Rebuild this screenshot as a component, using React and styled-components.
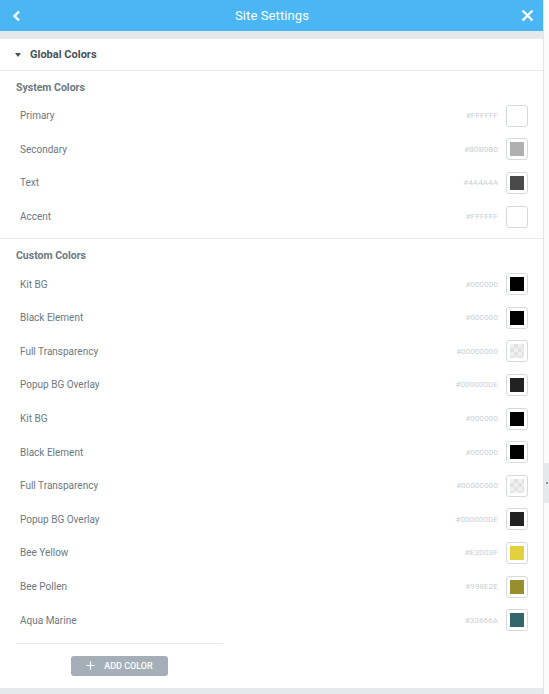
import React from "react";
import styled, { createGlobalStyle } from "styled-components";

const GlobalStyle = createGlobalStyle`
  html, body {
    margin: 0;
    padding: 0;
    background: #f7f8f9;
  }
  body {
    font-family: Roboto, "Liberation Sans", Arial, sans-serif;
  }
`;

const Page = styled.div`
  display: flex;
  height: 694px;
  overflow: hidden;
`;

const Panel = styled.div`
  width: 543px;
  display: flex;
  flex-direction: column;
  background: #e6e9ec;
  border-right: 1px solid #e2e5e8;
`;

const Side = styled.div`
  flex: 1;
  position: relative;
  background: #fbfbfc;
`;

const Handle = styled.div`
  position: absolute;
  left: 0;
  top: 463px;
  width: 5px;
  height: 40px;
  background: #e6e9ec;
  &::after {
    content: "";
    position: absolute;
    left: 2px;
    top: 19px;
    width: 2px;
    height: 2px;
    background: #8b959d;
  }
`;

const Header = styled.header`
  height: 31px;
  background: #4ab7f4;
  color: #fff;
  display: flex;
  align-items: center;
  justify-content: space-between;
  padding: 0 9px 0 10px;
`;

const Title = styled.h1`
  margin: 0;
  font-size: 13px;
  font-weight: 400;
  letter-spacing: 0.1px;
`;

const IconBtn = styled.span`
  width: 14px;
  height: 14px;
  display: flex;
  align-items: center;
  justify-content: center;
`;

const Body = styled.div`
  margin-top: 8px;
  background: #fff;
  display: flex;
  flex-direction: column;
  height: 649px;
`;

const SectionHead = styled.div`
  height: 31px;
  display: flex;
  align-items: center;
  gap: 9px;
  padding-left: 15px;
  border-bottom: 1px solid #e6e9ec;
  font-size: 11px;
  font-weight: 700;
  color: #495157;
`;

const Caret = styled.span`
  width: 0;
  height: 0;
  border-left: 3.5px solid transparent;
  border-right: 3.5px solid transparent;
  border-top: 4px solid #495157;
`;

const Group = styled.div`
  padding: ${(p) => p.$top}px 15px ${(p) => p.$bottom}px 16px;
  border-bottom: ${(p) => (p.$line ? "1px solid #e6e9ec" : "none")};
`;

const GroupTitle = styled.div`
  height: 15px;
  line-height: 15px;
  font-size: 10.5px;
  font-weight: 700;
  color: #6d7882;
  margin-bottom: 4px;
`;

const Row = styled.div`
  height: 33.6px;
  display: flex;
  align-items: center;
  padding-left: 4px;
`;

const Label = styled.span`
  flex: 1;
  font-size: 10px;
  color: #6d7882;
`;

const Hex = styled.span`
  font-size: 8px;
  color: #c9d0d6;
  margin-right: 8px;
  letter-spacing: 0.1px;
`;

const Swatch = styled.span`
  width: 22px;
  height: 22px;
  box-sizing: border-box;
  border: 1px solid #d5dadf;
  border-radius: 3px;
  padding: 3px;
  display: flex;
`;

const Fill = styled.span`
  flex: 1;
  background: ${(p) => p.$color};
  ${(p) =>
    p.$clear &&
    `
    background-color: #f1f1f1;
    background-image:
      linear-gradient(45deg, #e2e2e2 25%, transparent 25%, transparent 75%, #e2e2e2 75%),
      linear-gradient(45deg, #e2e2e2 25%, transparent 25%, transparent 75%, #e2e2e2 75%);
    background-size: 8px 8px;
    background-position: 0 0, 4px 4px;
  `}
`;

const Footer = styled.div`
  width: 207px;
  margin-left: 16px;
  border-top: 1px solid #e6e9ec;
  padding-top: 12px;
  display: flex;
  justify-content: center;
`;

const AddButton = styled.button`
  width: 97px;
  height: 20px;
  border: 0;
  border-radius: 3px;
  background: #a4afb7;
  color: #fff;
  font-family: inherit;
  font-size: 9px;
  font-weight: 500;
  display: flex;
  align-items: center;
  justify-content: center;
  gap: 9px;
  padding: 0;
`;

const system = [
  ["Primary", "#FFFFFF", "#ffffff"],
  ["Secondary", "#B0B0B0", "#b0b0b0"],
  ["Text", "#4A4A4A", "#4a4a4a"],
  ["Accent", "#FFFFFF", "#ffffff"],
];

const custom = [
  ["Kit BG", "#000000", "#000000"],
  ["Black Element", "#000000", "#000000"],
  ["Full Transparency", "#00000000", null],
  ["Popup BG Overlay", "#000000DE", "#222222"],
  ["Kit BG", "#000000", "#000000"],
  ["Black Element", "#000000", "#000000"],
  ["Full Transparency", "#00000000", null],
  ["Popup BG Overlay", "#000000DE", "#222222"],
  ["Bee Yellow", "#E3D03F", "#e3d03f"],
  ["Bee Pollen", "#998E2E", "#998e2e"],
  ["Aqua Marine", "#33666A", "#33666a"],
];

function ColorRow({ name, hex, color }) {
  return (
    <Row>
      <Label>{name}</Label>
      <Hex>{hex}</Hex>
      <Swatch>
        <Fill $color={color} $clear={!color} />
      </Swatch>
    </Row>
  );
}

export default function App() {
  return (
    <Page>
      <GlobalStyle />
      <Panel>
        <Header>
          <IconBtn>
            <svg width="10" height="12" viewBox="0 0 10 12">
              <path d="M7 1.5 L2.5 6 L7 10.5" fill="none" stroke="#fff" strokeWidth="2.4" />
            </svg>
          </IconBtn>
          <Title>Site Settings</Title>
          <IconBtn>
            <svg width="13" height="13" viewBox="0 0 13 13">
              <path d="M1.5 1.5 L11.5 11.5 M11.5 1.5 L1.5 11.5" stroke="#fff" strokeWidth="2.4" />
            </svg>
          </IconBtn>
        </Header>
        <Body>
          <SectionHead>
            <Caret />
            Global Colors
          </SectionHead>
          <Group $top={9} $bottom={5} $line>
            <GroupTitle>System Colors</GroupTitle>
            {system.map(([n, h, c], i) => (
              <ColorRow key={i} name={n} hex={h} color={c} />
            ))}
          </Group>
          <Group $top={9} $bottom={6}>
            <GroupTitle>Custom Colors</GroupTitle>
            {custom.map(([n, h, c], i) => (
              <ColorRow key={i} name={n} hex={h} color={c} />
            ))}
          </Group>
          <Footer>
            <AddButton>
              <svg width="9" height="9" viewBox="0 0 9 9">
                <path d="M4.5 0.5 V8.5 M0.5 4.5 H8.5" stroke="#fff" strokeWidth="1.2" />
              </svg>
              ADD COLOR
            </AddButton>
          </Footer>
        </Body>
      </Panel>
      <Side>
        <Handle />
      </Side>
    </Page>
  );
}
